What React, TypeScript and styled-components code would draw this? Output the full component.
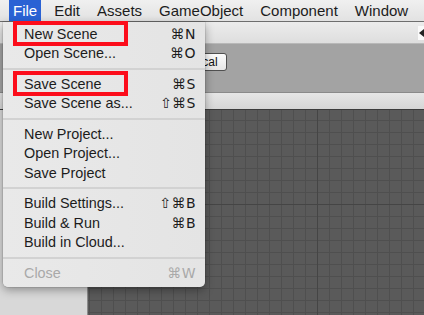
import React from "react";
import styled, { createGlobalStyle, css } from "styled-components";

const GlobalStyle = createGlobalStyle`
  html, body {
    margin: 0;
    padding: 0;
    overflow: hidden;
    background: #5a5a5a;
  }
  body {
    font-family: "Liberation Sans", "DejaVu Sans", sans-serif;
  }
`;

const Screen = styled.div`
  position: relative;
  width: 424px;
  height: 315px;
  overflow: hidden;
  display: flex;
  flex-direction: column;
`;

const MenuBar = styled.div`
  height: 21px;
  flex-shrink: 0;
  display: flex;
  align-items: stretch;
  gap: 9px;
  padding-left: 9px;
  background: linear-gradient(#f0f0f0, #e2e2e2);
  border-bottom: 1px solid #6e6e6e;
`;

const MenuTitle = styled.div<{ $active?: boolean }>`
  display: flex;
  align-items: center;
  padding: 0 4px;
  font-size: 15px;
  color: #1c1c1c;
  ${(p) =>
    p.$active &&
    css`
      background: #2a62d4;
      color: #fff;
    `}
`;

const Toolbar = styled.div`
  height: 21px;
  flex-shrink: 0;
  display: flex;
  justify-content: flex-end;
  align-items: center;
  background: linear-gradient(#ececec, #dedede);
  border-bottom: 1px solid #b8b8b8;
`;

const DockButton = styled.div`
  width: 6px;
  height: 14px;
  background: #fafafa;
  display: flex;
  align-items: center;
  justify-content: flex-end;
`;

const SceneBar = styled.div`
  height: 49px;
  flex-shrink: 0;
  display: flex;
  align-items: flex-start;
  padding: 9px 0 0 180px;
  box-sizing: border-box;
  background: #a3a3a3;
  border-bottom: 1px solid #8a8a8a;
`;

const PivotButton = styled.div`
  height: 16px;
  padding: 0 8px;
  display: flex;
  align-items: center;
  font-size: 12px;
  color: #111;
  background: linear-gradient(#fcfcfc, #e6e6e6);
  border: 1px solid #505050;
  border-radius: 3px;
`;

const TabStrip = styled.div`
  height: 16px;
  flex-shrink: 0;
  background: linear-gradient(#e6e6e6, #d6d6d6);
  border-bottom: 1px solid #3c3c3c;
`;

const Body = styled.div`
  flex: 1;
  display: flex;
`;

const Hierarchy = styled.div`
  width: 87px;
  background: #d8d8d8;
  border-right: 1px solid #8c8c8c;
`;

const SceneGrid = styled.div`
  flex: 1;
  background-color: #5a5a5a;
  background-image: linear-gradient(to right, transparent 229px, #454545 229px, #454545 230px, transparent 230px),
    linear-gradient(to bottom, transparent 94px, #454545 94px, #454545 95px, transparent 95px),
    linear-gradient(to right, #4f4f4f 1px, transparent 1px),
    linear-gradient(to bottom, #4f4f4f 1px, transparent 1px);
  background-size: 100% 100%, 100% 100%, 12px 12px, 12px 12px;
  background-position: 0 0, 0 0, 1px 10px, 1px 10px;
`;

const Dropdown = styled.div`
  position: absolute;
  left: 3px;
  top: 22px;
  width: 202px;
  padding: 2px 0 4px;
  box-sizing: border-box;
  background: linear-gradient(to right, #e9e9e9, #e4e4e4);
  border-radius: 0 0 5px 5px;
  box-shadow: 0 3px 10px rgba(0, 0, 0, 0.35), 0 0 0 0.5px rgba(0, 0, 0, 0.15);
`;

const Item = styled.div<{ $disabled?: boolean; $marked?: boolean }>`
  position: relative;
  height: 19.5px;
  display: flex;
  align-items: center;
  justify-content: space-between;
  padding: 0 9px 0 21px;
  font-size: 14.4px;
  color: ${(p) => (p.$disabled ? "#a9a9a9" : "#1c1c1c")};
  ${(p) =>
    p.$marked &&
    css`
      &::after {
        content: "";
        position: absolute;
        left: 10px;
        width: 107px;
        top: -3px;
        bottom: -2px;
        border: 4px solid #fc0d1b;
      }
    `}
`;

const Shortcut = styled.span`
  font-family: "DejaVu Sans", "Liberation Sans", sans-serif;
  font-size: 14px;
  letter-spacing: 0.5px;
`;

const Separator = styled.div`
  height: 11px;
  display: flex;
  align-items: center;
  &::before {
    content: "";
    flex: 1;
    height: 2px;
    background: #d2d2d2;
  }
`;

type Entry = { label: string; key?: string; disabled?: boolean; marked?: boolean } | "sep";

const entries: Entry[] = [
  { label: "New Scene", key: "⌘N", marked: true },
  { label: "Open Scene...", key: "⌘O" },
  "sep",
  { label: "Save Scene", key: "⌘S", marked: true },
  { label: "Save Scene as...", key: "⇧⌘S" },
  "sep",
  { label: "New Project..." },
  { label: "Open Project..." },
  { label: "Save Project" },
  "sep",
  { label: "Build Settings...", key: "⇧⌘B" },
  { label: "Build & Run", key: "⌘B" },
  { label: "Build in Cloud..." },
  "sep",
  { label: "Close", key: "⌘W", disabled: true },
];

const menus = ["File", "Edit", "Assets", "GameObject", "Component", "Window"];

const App: React.FC = () => {
  return (
    <>
      <GlobalStyle />
      <Screen>
        <MenuBar>
          {menus.map((m, i) => (
            <MenuTitle key={m} $active={i === 0}>
              {m}
            </MenuTitle>
          ))}
        </MenuBar>
        <Toolbar>
          <DockButton>
            <svg width="5" height="8" viewBox="0 0 5 8">
              <path d="M5 0 L0 4 L5 8 Z" fill="#222" />
            </svg>
          </DockButton>
        </Toolbar>
        <SceneBar>
          <PivotButton>Local</PivotButton>
        </SceneBar>
        <TabStrip />
        <Body>
          <Hierarchy />
          <SceneGrid />
        </Body>

        <Dropdown>
          {entries.map((e, i) =>
            e === "sep" ? (
              <Separator key={i} />
            ) : (
              <Item key={i} $disabled={e.disabled} $marked={e.marked}>
                <span>{e.label}</span>
                {e.key && <Shortcut>{e.key}</Shortcut>}
              </Item>
            )
          )}
        </Dropdown>
      </Screen>
    </>
  );
};

export default App;
